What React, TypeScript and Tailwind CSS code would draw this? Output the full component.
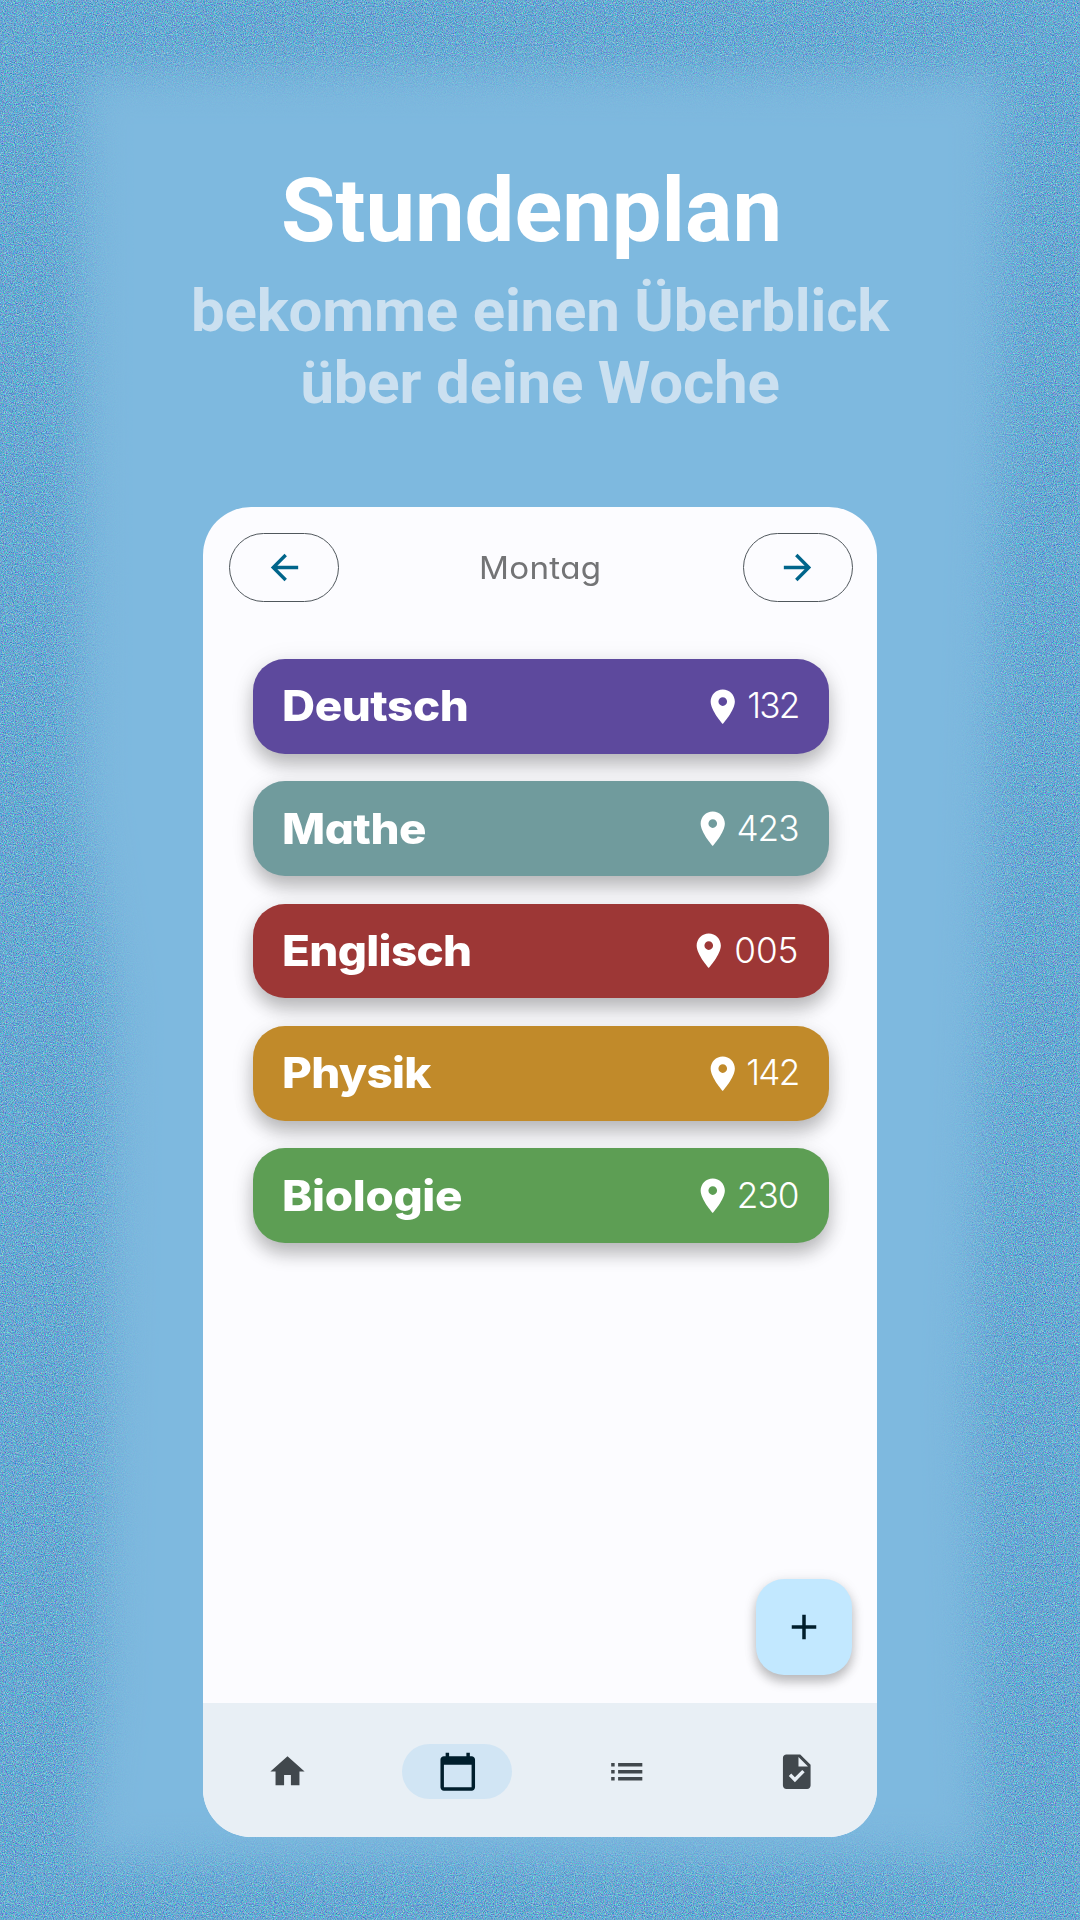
import React from "react";
import { MdAdd, MdArrowBack, MdArrowForward, MdCalendarToday, MdHome, MdList, MdLocationOn, MdTask } from "react-icons/md";

type Lesson = { name: string; room: string; color: string; nameFit: string; roomFit: string };

const lessons: Lesson[] = [
  { name: "Deutsch", room: "132", color: "bg-[#5d499d]", nameFit: "tracking-[-0.4px]", roomFit: "w-[55px] tracking-[-1.8px]" },
  { name: "Mathe", room: "423", color: "bg-[#709b9d]", nameFit: "tracking-[-0.5px]", roomFit: "w-[65px] tracking-[-1px]" },
  { name: "Englisch", room: "005", color: "bg-[#9d3736]", nameFit: "tracking-[-0.6px]", roomFit: "w-[69px] tracking-[0px]" },
  { name: "Physik", room: "142", color: "bg-[#c18a2a]", nameFit: "tracking-[-0.6px]", roomFit: "w-[55px] tracking-[-1.8px]" },
  { name: "Biologie", room: "230", color: "bg-[#5d9e54]", nameFit: "tracking-[-0.3px]", roomFit: "w-[65px] tracking-[-1px]" },
];

function GrainBackground() {
  return (
    <svg className="absolute inset-0" width="1080" height="1920" viewBox="0 0 1080 1920" aria-hidden="true">
      <defs>
        <filter id="grain" x="0" y="0" width="100%" height="100%" colorInterpolationFilters="sRGB">
          <feTurbulence type="fractalNoise" baseFrequency="0.9" numOctaves="3" seed="4" />
          <feColorMatrix values="0.75 0 0 0 0.035  0 0.72 0 0 0.3  0 0 0.4 0 0.62  0 0 0 0 1" />
        </filter>
        <filter id="soft" x="-20%" y="-20%" width="140%" height="140%">
          <feGaussianBlur stdDeviation="22" />
        </filter>
        <mask id="frame" maskUnits="userSpaceOnUse" x="0" y="0" width="1080" height="1920">
          <rect width="1080" height="1920" fill="white" />
          <path
            d="M82 72H500L1000 76L1000 400L988 900L972 1400L984 1856H540L82 1862L100 1700L108 1300L112 1000L80 800Z"
            fill="black"
            filter="url(#soft)"
          />
        </mask>
      </defs>
      <g mask="url(#frame)">
        <rect width="1080" height="1920" filter="url(#grain)" />
      </g>
    </svg>
  );
}

function NavItem({ active, children }: { active?: boolean; children: React.ReactNode }) {
  return (
    <div className="flex flex-1 justify-center">
      <div
        className={
          active
            ? "flex h-[55px] w-[110px] items-center justify-center rounded-full bg-[#d1e5f4] text-[#001e2c]"
            : "flex h-[55px] w-[110px] items-center justify-center text-[#41484d]"
        }
      >
        {children}
      </div>
    </div>
  );
}

export default function App() {
  return (
    <div className="relative h-[1920px] w-[1080px] overflow-hidden bg-[#7eb9df]">
      <GrainBackground />
      <div className="relative flex flex-col items-center pt-[161px]">
        <h1 className="mr-[17px] font-['Roboto',sans-serif] text-[88.5px] leading-[100px] font-bold text-white">Stundenplan</h1>
        <p className="mt-[14px] text-center font-['Roboto',sans-serif] text-[60px] leading-[71.7px] font-bold tracking-[-0.2px] whitespace-nowrap text-[#cbe0f0]">
          bekomme einen Überblick
          <br />
          über deine Woche
        </p>

        <main className="absolute top-[507px] left-[203px] flex h-[1330px] w-[674px] flex-col overflow-hidden rounded-[48px] bg-[#fcfcff] font-['Inter',sans-serif] [font-feature-settings:'cv11']">
          <header className="flex items-center justify-between pt-[26px] pr-[24px] pl-[26px]">
            <button className="flex h-[69px] w-[110px] items-center justify-center rounded-full border-[1.5px] border-[#50575c] text-[#00658b]">
              <MdArrowBack size={41} />
            </button>
            <span className="scale-x-[1.07] pr-[2px] text-[31px] leading-[40px] tracking-[0.3px] text-[#737476]">Montag</span>
            <button className="flex h-[69px] w-[110px] items-center justify-center rounded-full border-[1.5px] border-[#50575c] text-[#00658b]">
              <MdArrowForward size={41} />
            </button>
          </header>

          <section className="mt-[57px] flex flex-col gap-[27.85px] pr-[48px] pl-[50px]">
            {lessons.map((l) => (
              <div
                key={l.name}
                className={`flex h-[94.5px] items-center justify-between rounded-[32px] pr-[30.5px] pl-[29px] text-white shadow-[0_11px_18px_rgba(0,0,0,0.24),0_3px_26px_rgba(0,0,0,0.08)] ${l.color}`}
              >
                <span className={`origin-left scale-x-[1.09] text-[42px] leading-[50px] font-extrabold ${l.nameFit}`}>{l.name}</span>
                <span className="flex items-center">
                  <MdLocationOn size={41.5} />
                  <span className={`pb-[2px] text-right text-[35.2px] leading-[42px] font-[350] whitespace-nowrap ${l.roomFit}`}>{l.room}</span>
                </span>
              </div>
            ))}
          </section>

          <div className="mt-auto mb-[28px] flex justify-end pr-[25px]">
            <button className="flex h-[96.5px] w-[96.5px] items-center justify-center rounded-[28px] bg-[#c2e8ff] text-[#001e2c] shadow-[0_7px_11px_rgba(0,0,0,0.22),0_2px_14px_rgba(0,0,0,0.1)]">
              <MdAdd size={42} />
            </button>
          </div>

          <nav className="-mr-[4px] flex h-[134px] items-start bg-[#e8eff5] pt-[41px]">
            <NavItem>
              <MdHome size={41} />
            </NavItem>
            <NavItem active>
              <MdCalendarToday size={41.5} />
            </NavItem>
            <NavItem>
              <MdList size={41.5} />
            </NavItem>
            <NavItem>
              <MdTask size={41.5} />
            </NavItem>
          </nav>
        </main>
      </div>
    </div>
  );
}
